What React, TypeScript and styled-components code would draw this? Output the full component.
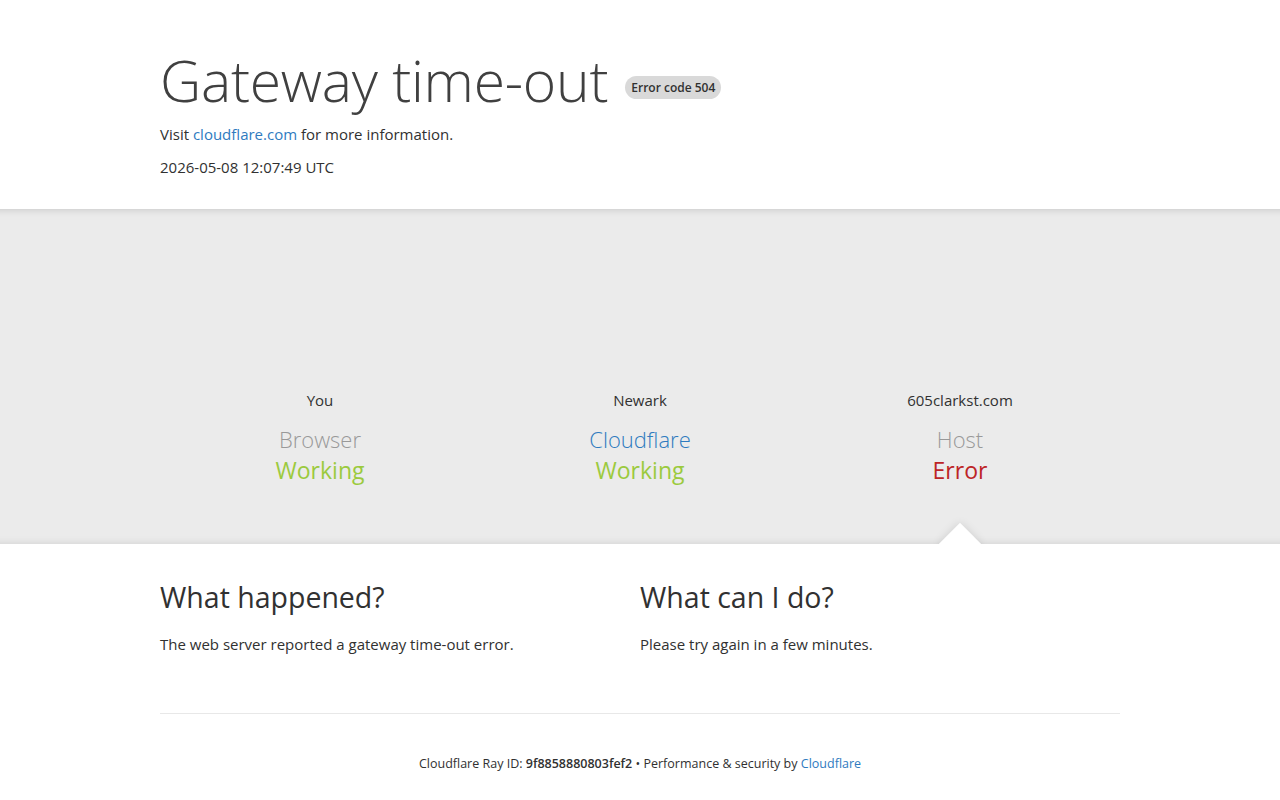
import React from 'react';
import styled, { createGlobalStyle } from 'styled-components';

const GlobalStyle = createGlobalStyle`
  html, body {
    margin: 0;
    padding: 0;
    background: #fff;
  }
  body {
    font-family: "Open Sans", "Noto Sans", "Liberation Sans", sans-serif;
    color: #404040;
    -webkit-font-smoothing: antialiased;
  }
  * {
    box-sizing: border-box;
  }
`

const Wrapper = styled.div`
  width: 960px;
  margin: 0 auto;
`

const Header = styled.header`
  background: #fff;
  padding: 44px 0 30px;
`

const TitleRow = styled.div`
  display: flex;
  align-items: center;
`

const Title = styled.h1`
  margin: 0;
  font-size: 57px;
  font-weight: 300;
  line-height: 72px;
  color: #404040;
  letter-spacing: -0.25px;
`

const Badge = styled.span`
  margin: 14px 0 0 17px;
  padding: 0 6px;
  height: 23px;
  line-height: 23px;
  border-radius: 12px;
  background: #d9d9d9;
  color: #313131;
  font-size: 12px;
  font-weight: 600;
  white-space: nowrap;
`

const Line = styled.p<{ gap: number }>`
  margin: ${p => p.gap}px 0 0;
  font-size: 15px;
  line-height: 24px;
  color: #313131;
`

const Link = styled.a`
  color: #2f7bbf;
  text-decoration: none;
`

const Status = styled.section`
  position: relative;
  overflow: hidden;
  background: #ebebeb;
  padding: 181px 0 59px;
  box-shadow: inset 0 10px 8px -10px rgba(0, 0, 0, 0.18),
    inset 0 -10px 8px -10px rgba(0, 0, 0, 0.12);
`

const Nodes = styled.div`
  display: grid;
  grid-template-columns: repeat(3, 1fr);
`

const Node = styled.div`
  position: relative;
  display: flex;
  flex-direction: column;
  align-items: center;
  text-align: center;
`

const Place = styled.span`
  font-size: 15px;
  line-height: 20px;
  color: #313131;
`

const Role = styled.span<{ blue?: boolean }>`
  margin-top: 14px;
  font-size: 22px;
  font-weight: 300;
  line-height: 30px;
  color: ${p => (p.blue ? '#2f7bbf' : '#999')};
`

const State = styled.span<{ error?: boolean }>`
  margin-top: 1px;
  font-size: 23px;
  line-height: 30px;
  color: ${p => (p.error ? '#bd2426' : '#9bca3e')};
`

// white notch pointing at the failing node
const Pointer = styled.span`
  position: absolute;
  left: 50%;
  bottom: -74px;
  width: 30px;
  height: 30px;
  margin-left: -15px;
  background: #fff;
  transform: rotate(45deg);
  box-shadow: 0 0 10px rgba(0, 0, 0, 0.12);
`

const Details = styled.section`
  padding: 35px 0 0;
`

const Columns = styled.div`
  display: grid;
  grid-template-columns: 1fr 1fr;
`

const Heading = styled.h2`
  margin: 0;
  font-size: 28.5px;
  font-weight: 400;
  line-height: 36px;
  color: #313131;
`

const Text = styled.p`
  margin: 18px 0 0;
  font-size: 15px;
  line-height: 22px;
  color: #313131;
`

const Rule = styled.hr`
  margin: 58px 0 0;
  border: 0;
  border-top: 1px solid #e8e8e8;
`

const Footer = styled.footer`
  padding: 41px 0 26px;
  text-align: center;
  font-size: 12.5px;
  line-height: 18px;
  color: #313131;

  strong {
    font-weight: 600;
  }
`

const nodes = [
  { place: 'You', role: 'Browser', ok: true },
  { place: 'Newark', role: 'Cloudflare', ok: true, blue: true },
  { place: '605clarkst.com', role: 'Host', ok: false },
]

export default function App() {
  return (
    <>
      <GlobalStyle />
      <Header>
        <Wrapper>
          <TitleRow>
            <Title>Gateway time-out</Title>
            <Badge>Error code 504</Badge>
          </TitleRow>
          <Line gap={6}>
            Visit <Link href="#">cloudflare.com</Link> for more information.
          </Line>
          <Line gap={9}>2026-05-08 12:07:49 UTC</Line>
        </Wrapper>
      </Header>

      <Status>
        <Wrapper>
          <Nodes>
            {nodes.map(n => (
              <Node key={n.role}>
                <Place>{n.place}</Place>
                <Role blue={n.blue}>{n.role}</Role>
                <State error={!n.ok}>{n.ok ? 'Working' : 'Error'}</State>
                {!n.ok && <Pointer />}
              </Node>
            ))}
          </Nodes>
        </Wrapper>
      </Status>

      <Details>
        <Wrapper>
          <Columns>
            <div>
              <Heading>What happened?</Heading>
              <Text>The web server reported a gateway time-out error.</Text>
            </div>
            <div>
              <Heading>What can I do?</Heading>
              <Text>Please try again in a few minutes.</Text>
            </div>
          </Columns>
          <Rule />
          <Footer>
            Cloudflare Ray ID: <strong>9f8858880803fef2</strong> &bull; Performance &amp; security by{' '}
            <Link href="#">Cloudflare</Link>
          </Footer>
        </Wrapper>
      </Details>
    </>
  );
}
